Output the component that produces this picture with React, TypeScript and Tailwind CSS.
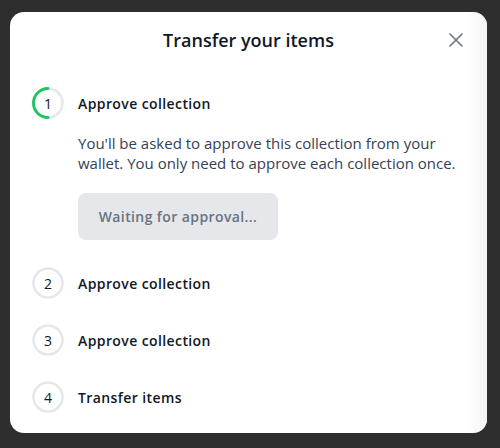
import React from 'react';

const steps = [
  { n: 2, label: 'Approve collection' },
  { n: 3, label: 'Approve collection' },
  { n: 4, label: 'Transfer items' },
];

const StepCircle: React.FC<{ n: number; active?: boolean }> = ({ n, active }) => (
  <div className="relative w-8 h-8 shrink-0 flex items-center justify-center">
    <svg className="absolute inset-0" width="32" height="32" viewBox="0 0 32 32">
      <circle cx="16" cy="16" r="14.5" fill="none" stroke="#e5e7eb" strokeWidth="2.5" />
      {active && (
        <path d="M16 1.5 A14.5 14.5 0 0 0 16 30.5" fill="none" stroke="#22c55e" strokeWidth="3" strokeLinecap="round" />
      )}
    </svg>
    <span className="relative text-[14px] font-medium text-gray-900">{n}</span>
  </div>
);

export default function App() {
  return (
    <div
      className="w-[500px] h-[448px] bg-[#2e2e2e] pt-3 pl-2.5"
      style={{ fontFamily: '"Open Sans", "Liberation Sans", sans-serif' }}
    >
      <div className="relative overflow-hidden w-[477px] h-[421px] bg-white rounded-[14px] px-[22px] pt-[17px]">
        {/* faint scroll shade on the right edge */}
        <div className="absolute right-0 top-0 bottom-0 w-[22px] bg-gradient-to-r from-white/0 to-gray-100 pointer-events-none" />

        <div className="relative flex items-center justify-center h-[22px]">
          <h2 className="text-[18px] font-semibold text-gray-900">Transfer your items</h2>
          <button className="absolute right-0 top-0.5 text-gray-500">
            <svg width="18" height="18" viewBox="0 0 18 18" fill="none" stroke="currentColor" strokeWidth="1.6" strokeLinecap="round">
              <path d="M3 3L15 15M15 3L3 15" />
            </svg>
          </button>
        </div>

        <div className="mt-[36px] flex items-center gap-[14px]">
          <StepCircle n={1} active />
          <span className="text-[14px] font-semibold tracking-[0.4px] text-gray-900">Approve collection</span>
        </div>
        <div className="pl-[46px]">
          <p className="mt-[14px] text-[15px] leading-[20px] text-gray-700">
            You'll be asked to approve this collection from your wallet. You only need to approve each collection once.
          </p>
          <button className="mt-[20px] w-[200px] h-[47px] rounded-lg bg-gray-200 text-[14px] font-semibold tracking-[0.4px] text-gray-500">
            Waiting for approval...
          </button>
        </div>

        <div className="mt-[27px] flex flex-col gap-[25px]">
          {steps.map((s) => (
            <div key={s.n} className="flex items-center gap-[14px]">
              <StepCircle n={s.n} />
              <span className="text-[14px] font-semibold tracking-[0.4px] text-gray-900">{s.label}</span>
            </div>
          ))}
        </div>
      </div>
    </div>
  );
}
